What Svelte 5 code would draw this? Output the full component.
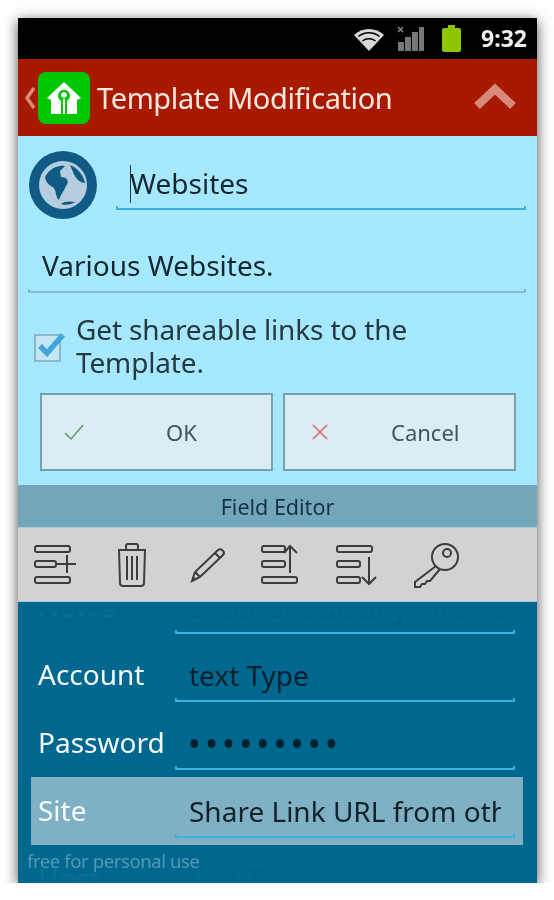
<script lang="ts">
  const fields = [
    { label: 'Notes', value: 'enter or edit any info here', faint: true },
    { label: 'Account', value: 'text Type' },
    { label: 'Password', value: '•••••••••', secret: true },
    { label: 'Site', value: 'Share Link URL from other apps', active: true },
    { label: 'Host', value: 'text Type' }
  ];
  let shareable = $state(true);
</script>

<div class="phone">
  <div class="status">
    <svg class="wifi" width="32" height="26" viewBox="0 0 32 26">
      <path d="M16 25 L1 9 C9 1 23 1 31 9 Z" fill="#d8d8d8"/>
      <path d="M5.5 10.5 C11 5.5 21 5.5 26.5 10.5 M9.5 15 C13 12 19 12 22.5 15" fill="none" stroke="#000" stroke-width="1.6"/>
    </svg>
    <svg class="signal" width="28" height="27" viewBox="0 0 28 27">
      <path d="M1 2l5 5M6 2l-5 5" stroke="#8a8a8a" stroke-width="1.4"/>
      <rect x="1" y="17" width="6" height="9" fill="#777"/>
      <rect x="8" y="12" width="6" height="14" fill="#777"/>
      <rect x="15" y="7" width="6" height="19" fill="#777"/>
      <rect x="22" y="2" width="5" height="24" fill="#777"/>
    </svg>
    <svg class="battery" width="21" height="29" viewBox="0 0 21 29">
      <path d="M7 1h7v3h4q2 0 2 2v20q0 2-2 2H3q-2 0-2-2V6q0-2 2-2h4z" fill="#8fc400"/>
    </svg>
    <span class="time">9:32</span>
  </div>

  <header class="appbar">
    <svg class="back" width="12" height="22" viewBox="0 0 12 22">
      <path d="M10 1 L3 11 L10 21" fill="none" stroke="#d98a7c" stroke-width="3.5"/>
    </svg>
    <div class="logo">
      <svg width="36" height="34" viewBox="0 0 36 34">
        <path fill-rule="evenodd" fill="#fff" d="M18 1 L35 17 L31 19 L31 33 L21 33 L21 20 A6 6 0 1 0 15 20 L15 33 L5 33 L5 19 L1 17 Z M18 11 A3 3 0 1 1 17.9 11 Z"/>
        <rect x="17" y="18" width="2" height="15" fill="#fff"/>
      </svg>
    </div>
    <h1>Template Modification</h1>
    <svg class="collapse" width="42" height="27" viewBox="0 0 42 27">
      <path d="M3 23 L21 6 L39 23" fill="none" stroke="#d9897b" stroke-width="8"/>
    </svg>
  </header>

  <section class="form">
    <div class="name-row">
      <svg class="globe" width="70" height="70" viewBox="0 0 70 70">
        <circle cx="35" cy="35" r="34" fill="#0f5b85"/>
        <circle cx="35" cy="35" r="24" fill="#b4cedf"/>
        <path d="M17 27 C22 18 30 15 37 16 L32 21 L33 27 C39 27 42 31 38 36 C36 41 33 44 31 50 C27 47 29 41 25 37 C21 35 18 33 17 27 Z" fill="#0f5b85"/>
        <path d="M42 15 C50 18 56 26 57 33 C52 33 47 28 45 22 Z M33 54 C38 56 44 54 47 52 C43 51 36 51 33 54 Z" fill="#0f5b85"/>
      </svg>
      <div class="edit title-edit"><span class="caret"></span>Websites</div>
    </div>

    <div class="edit desc-edit">Various Websites.</div>

    <label class="share">
      <input type="checkbox" bind:checked={shareable} />
      <svg class="box" width="34" height="32" viewBox="0 0 34 32">
        <rect x="1" y="5" width="25" height="26" fill="#c4e6f5" stroke="#7aa6bc" stroke-width="1.5"/>
        {#if shareable}
          <path d="M6 16 L13 23 L29 5" fill="none" stroke="#3fa6dc" stroke-width="5.5"/>
        {/if}
      </svg>
      <span>Get shareable links to the Template.</span>
    </label>

    <div class="actions">
      <button>
        <svg width="20" height="18" viewBox="0 0 20 18"><path d="M1 10 L7 16 L19 2" fill="none" stroke="#5f9a6a" stroke-width="1.5"/></svg>
        <span>OK</span>
      </button>
      <button class="cancel">
        <svg width="18" height="18" viewBox="0 0 18 18"><path d="M2 2 L16 16 M16 2 L2 16" fill="none" stroke="#e2646c" stroke-width="1.6"/></svg>
        <span>Cancel</span>
      </button>
    </div>
  </section>

  <div class="section-title">Field Editor</div>

  <nav class="tools">
    <button aria-label="Add field">
      <svg width="48" height="48" viewBox="0 0 48 48">
        <rect x="3" y="5" width="35" height="6" rx="2"/><rect x="3" y="20" width="21" height="6" rx="2"/><rect x="3" y="36" width="35" height="6" rx="2"/>
        <path d="M24 23H44M35 14V32"/>
      </svg>
    </button>
    <button aria-label="Delete field">
      <svg width="48" height="48" viewBox="0 0 48 48">
        <path d="M10 9H38M18 8 V5 Q18 3 20 3 H28 Q30 3 30 5 V8"/>
        <path d="M11 9 L12 42 Q12 45 15 45 H33 Q36 45 36 42 L37 9"/>
        <path d="M19 15V39M24 15V39M29 15V39"/>
      </svg>
    </button>
    <button aria-label="Edit field">
      <svg width="48" height="48" viewBox="0 0 48 48">
        <path d="M8 40 L11 31 L34 9 Q37 7 39 10 Q41 12 39 14 L16 36 Z"/>
        <path d="M11 31 L16 36 M31 12 L36 17 M8.500 36 L11.500 39"/>
      </svg>
    </button>
    <button aria-label="Move field up">
      <svg width="48" height="48" viewBox="0 0 48 48">
        <rect x="2" y="5" width="23" height="6" rx="2"/><rect x="2" y="20" width="23" height="6" rx="2"/><rect x="2" y="36" width="35" height="6" rx="2"/>
        <path d="M30 32V5M24 12 L30 5 L37 12"/>
      </svg>
    </button>
    <button aria-label="Move field down">
      <svg width="48" height="48" viewBox="0 0 48 48">
        <rect x="1" y="5" width="35" height="6" rx="2"/><rect x="1" y="20" width="23" height="6" rx="2"/><rect x="1" y="36" width="23" height="6" rx="2"/>
        <path d="M33 16V43M26 36 L33 43 L40 36"/>
      </svg>
    </button>
    <button aria-label="Password key">
      <svg width="48" height="48" viewBox="0 0 48 48">
        <circle cx="33" cy="16" r="13"/><circle cx="35" cy="12" r="4"/>
        <path d="M24 25 L3 41 L3 46 H8 L10 43 L13 43 L15 40 L18 40 L28 28"/>
      </svg>
    </button>
  </nav>

  <div class="fields">
    <div class="list">
      {#each fields as f}
        <div class="field" class:active={f.active} class:faint={f.faint}>
          <span class="label">{f.label}</span>
          <div class="edit value" class:secret={f.secret}><span class="clip">{f.value}</span></div>
        </div>
      {/each}
    </div>
    <div class="fade top"></div>
    <div class="fade bottom"></div>
    <div class="watermark">free for personal use</div>
  </div>
</div>

<style>
  :global(body) {
    margin: 0;
    background: #fff;
  }
  .phone {
    box-sizing: border-box;
    width: 519px;
    height: 865px;
    margin: 18px 0 0 18px;
    display: flex;
    flex-direction: column;
    overflow: hidden;
    font-family: "Noto Sans", "Open Sans", sans-serif;
    box-shadow: 0 3px 13px rgba(0, 0, 0, 0.7);
    filter: blur(0.5px);
  }
  .status {
    height: 41px;
    flex: none;
    background: #000;
    display: flex;
    align-items: center;
    padding-right: 10px;
    justify-content: flex-end;
  }
  .wifi { margin-right: 12px; margin-top: 1px; }
  .signal { margin-right: 16px; }
  .battery { margin-right: 19px; }
  .time {
    color: #eee;
    font-size: 23px;
    font-weight: 700;
    line-height: 1;
  }
  .appbar {
    height: 77px;
    flex: none;
    background: #a81a00;
    display: flex;
    align-items: center;
    padding-left: 6px;
    box-sizing: border-box;
  }
  .back { margin-right: 2px; }
  .logo {
    width: 52px;
    height: 52px;
    background: #00c800;
    border-radius: 8px;
    display: flex;
    align-items: center;
    justify-content: center;
  }
  .appbar h1 {
    margin: 0 0 0 7px;
    font-size: 29px;
    letter-spacing: -0.4px;
    font-weight: 400;
    color: #fbe6e0;
    flex: 1;
    white-space: nowrap;
  }
  .collapse { margin-right: 21px; margin-top: -2px; }
  .form {
    height: 349px;
    flex: none;
    box-sizing: border-box;
    background: #a6e8ff;
    padding: 14px 11px 0 10px;
    display: flex;
    flex-direction: column;
  }
  .name-row {
    display: flex;
    align-items: flex-start;
    gap: 18px;
  }
  .edit {
    position: relative;
    color: #16262e;
  }
  .edit::after {
    content: "";
    position: absolute;
    left: 0;
    right: 0;
    bottom: 0;
    height: 4px;
    border: 2px solid #38b0e0;
    border-top: 0;
    box-sizing: border-box;
  }
  .title-edit {
    flex: 1;
    height: 60px;
    line-height: 66px;
    font-size: 28px;
    padding-left: 14px;
  }
  .caret {
    display: inline-block;
    width: 1px;
    height: 38px;
    margin-right: -1px;
    background: #1b3a48;
    vertical-align: -9px;
  }
  .desc-edit {
    margin-top: 18px;
    height: 55px;
    line-height: 54px;
    font-size: 28px;
    padding-left: 14px;
  }
  .desc-edit::after { border-color: #86bccf; }
  .share {
    display: flex;
    align-items: center;
    margin: 20px 0 0 6px;
    font-size: 28px;
    letter-spacing: -0.15px;
    line-height: 33px;
    color: #26393f;
    gap: 8px;
  }
  .share input {
    position: absolute;
    opacity: 0;
    width: 0;
    height: 0;
  }
  .box { flex: none; margin-top: -1px; }
  .share span { width: 390px; }
  .actions {
    display: flex;
    gap: 10px;
    margin: 14px 10px 0 12px;
  }
  .actions button {
    flex: 1;
    height: 78px;
    box-sizing: border-box;
    background: #daedf5;
    border: 2px solid #7d9fae;
    display: flex;
    align-items: center;
    font: inherit;
    font-size: 22px;
    color: #42555c;
    padding: 0 0 0 22px;
  }
  .actions button span { margin-left: 82px; }
  .actions .cancel svg { margin-left: 4px; }
  .actions .cancel span { margin-left: 62px; }
  .section-title {
    height: 42px;
    flex: none;
    background: #72a6ba;
    color: #17304a;
    font-size: 21.500px;
    line-height: 44px;
    text-align: center;
  }
  .tools {
    height: 75px;
    flex: none;
    background: #d2d2d2;
    display: flex;
    align-items: center;
    border-top: 1px solid #a8c8d4;
    border-bottom: 1px solid #a8c8d4;
    box-sizing: border-box;
  }
  .tools button {
    width: 76px;
    height: 48px;
    padding: 0;
    border: 0;
    background: none;
    display: flex;
    justify-content: center;
  }
  .tools svg {
    fill: none;
    stroke: #3c3c3c;
    stroke-width: 2;
  }
  .fields {
    flex: 1;
    min-height: 0;
    position: relative;
    overflow: hidden;
    background: #00678f;
  }
  .list {
    margin-top: -29px;
    padding: 0 14px 0 13px;
    display: flex;
    flex-direction: column;
  }
  .field {
    height: 68px;
    flex: none;
    display: flex;
    align-items: center;
    padding: 0 8px 0 7px;
  }
  .field.active { background: #7fb0c4; }
  .label {
    width: 137px;
    flex: none;
    font-size: 28px;
    color: #f4fafc;
    margin-top: -2px;
  }
  .faint .label { color: #7fd07f; }
  .value {
    flex: 1;
    min-width: 0;
    height: 58px;
    line-height: 62px;
    font-size: 28px;
    padding: 0 14px;
    margin-top: -4px;
    color: #04202c;
  }
  .active .value { color: #11232a; }
  .secret .clip { letter-spacing: 6.600px; font-weight: 700; }
  .clip {
    display: block;
    overflow: hidden;
    white-space: nowrap;
  }
  .fade {
    position: absolute;
    left: 0;
    right: 0;
    height: 26px;
    pointer-events: none;
  }
  .fade.top {
    top: 0;
    background: linear-gradient(#00678f 30%, rgba(0, 103, 143, 0.75));
  }
  .fade.bottom {
    bottom: 0;
    background: linear-gradient(rgba(0, 103, 143, 0.85), #00678f);
  }
  .watermark {
    position: absolute;
    left: 9px;
    bottom: 10px;
    font-size: 18.500px;
    color: rgba(255, 255, 255, 0.32);
    letter-spacing: -0.4px;
  }
</style>
